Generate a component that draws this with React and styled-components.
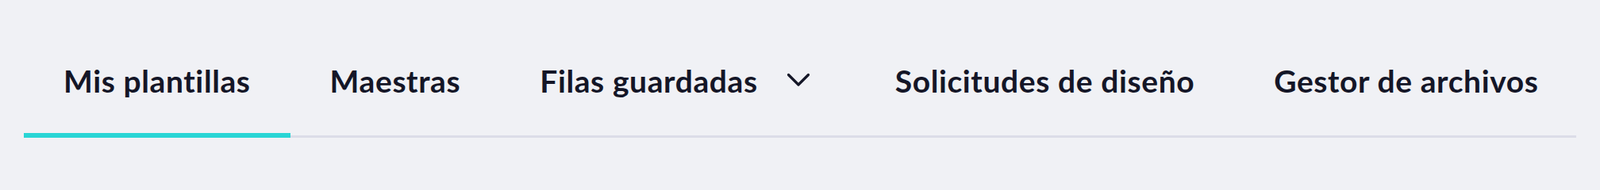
import React from 'react';
import styled, { createGlobalStyle } from 'styled-components';

const GlobalStyle = createGlobalStyle`
    html, body {
        margin: 0;
        padding: 0;
        background-color: #f0f1f5;
    }
`;

const Nav = styled.nav`
    width: 100%;
    height: 204px;
    padding: 0 30px;
    box-sizing: border-box;
    background-color: #f0f1f5;
`;

const TabList = styled.ul`
    display: flex;
    margin: 0;
    padding: 0;
    list-style: none;
    border-bottom: 3px solid #dcdde8;
`;

const Tab = styled.li`
    position: relative;
    display: flex;
    align-items: center;
    height: 171px;
    padding: 32px 50px 0 50px;
    box-sizing: border-box;
    font-family: Lato, 'Noto Sans', sans-serif;
    font-weight: 700;
    font-size: 39px;
    letter-spacing: 0.6px;
    color: #141627;
    white-space: nowrap;
    cursor: pointer;

    &::after {
        content: '';
        display: ${(p) => (p.$active ? 'block' : 'none')};
        position: absolute;
        left: 0;
        right: 0;
        bottom: -3px;
        height: 6px;
        background-color: #29d5d5;
    }
`;

const Chevron = styled.svg`
    flex-shrink: 0;
    width: 30px;
    height: 18px;
    margin-left: 36px;
    margin-right: 7px;
    margin-top: -2px;
`;

const tabs = [
    { label: 'Mis plantillas', active: true },
    { label: 'Maestras' },
    { label: 'Filas guardadas', dropdown: true },
    { label: 'Solicitudes de diseño' },
    { label: 'Gestor de archivos' },
];

const App = () => {
    return (
        <>
            <GlobalStyle />
            <Nav>
                <TabList>
                    {tabs.map((tab) => (
                        <Tab key={tab.label} $active={tab.active}>
                            {tab.label}
                            {tab.dropdown && (
                                <Chevron viewBox="0 0 30 18" fill="none">
                                    <path
                                        d="M2.5 2.5 L15 15 L27.5 2.5"
                                        stroke="#141627"
                                        strokeWidth="3.2"
                                        strokeLinecap="round"
                                        strokeLinejoin="round"
                                    />
                                </Chevron>
                            )}
                        </Tab>
                    ))}
                </TabList>
            </Nav>
        </>
    );
};

export default App;
